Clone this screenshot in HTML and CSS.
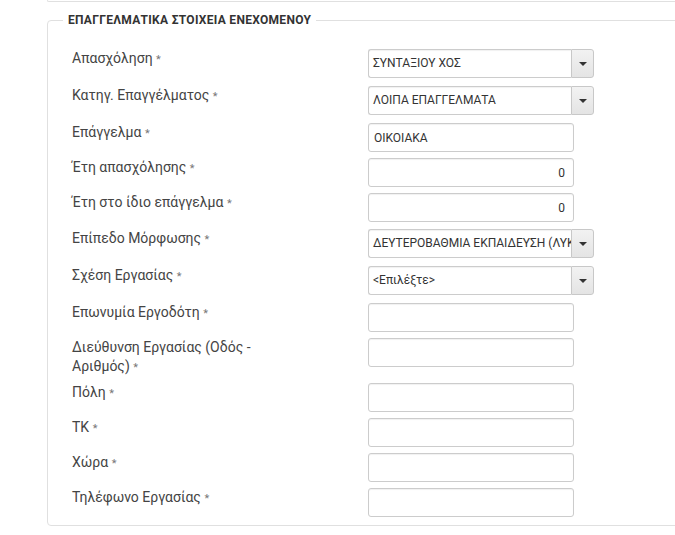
FILE: index.html
```html
<!DOCTYPE html>
<html lang="el">
<head>
  <meta charset="UTF-8" />
  <title>Επαγγελματικά στοιχεία</title>
  <link rel="stylesheet" href="styles.css">
</head>
<body>
  <div class="prev-panel"></div>

  <fieldset class="panel">
    <legend>ΕΠΑΓΓΕΛΜΑΤΙΚΑ ΣΤΟΙΧΕΙΑ ΕΝΕΧΟΜΕΝΟΥ</legend>

    <div class="row sel">
      <label class="lbl">Απασχόληση <span class="req">*</span></label>
      <div class="combo">
        <div class="combo-text">ΣΥΝΤΑΞΙΟΥ ΧΟΣ</div>
        <div class="combo-btn"><span class="caret"></span></div>
      </div>
    </div>

    <div class="row sel">
      <label class="lbl">Κατηγ. Επαγγέλματος <span class="req">*</span></label>
      <div class="combo">
        <div class="combo-text">ΛΟΙΠΑ ΕΠΑΓΓΕΛΜΑΤΑ</div>
        <div class="combo-btn"><span class="caret"></span></div>
      </div>
    </div>

    <div class="row">
      <label class="lbl">Επάγγελμα <span class="req">*</span></label>
      <input class="field" type="text" value="ΟΙΚΟΙΑΚΑ" />
    </div>

    <div class="row">
      <label class="lbl">Έτη απασχόλησης <span class="req">*</span></label>
      <input class="field num" type="text" value="0" />
    </div>

    <div class="row wide">
      <label class="lbl">Έτη στο ίδιο επάγγελμα <span class="req">*</span></label>
      <input class="field num" type="text" value="0" />
    </div>

    <div class="row sel">
      <label class="lbl">Επίπεδο Μόρφωσης <span class="req">*</span></label>
      <div class="combo">
        <div class="combo-text">ΔΕΥΤΕΡΟΒΑΘΜΙΑ ΕΚΠΑΙΔΕΥΣΗ (ΛΥΚΕΙΟ)</div>
        <div class="combo-btn"><span class="caret"></span></div>
      </div>
    </div>

    <div class="row sel">
      <label class="lbl">Σχέση Εργασίας <span class="req">*</span></label>
      <div class="combo">
        <div class="combo-text">&lt;Επιλέξτε&gt;</div>
        <div class="combo-btn"><span class="caret"></span></div>
      </div>
    </div>

    <div class="row">
      <label class="lbl">Επωνυμία Εργοδότη <span class="req">*</span></label>
      <input class="field" type="text" />
    </div>

    <div class="row">
      <label class="lbl">Διεύθυνση Εργασίας (Οδός - Αριθμός) <span class="req">*</span></label>
      <input class="field" type="text" />
    </div>

    <div class="row">
      <label class="lbl">Πόλη <span class="req">*</span></label>
      <input class="field" type="text" />
    </div>

    <div class="row">
      <label class="lbl">ΤΚ <span class="req">*</span></label>
      <input class="field" type="text" />
    </div>

    <div class="row">
      <label class="lbl">Χώρα <span class="req">*</span></label>
      <input class="field" type="text" />
    </div>

    <div class="row last">
      <label class="lbl">Τηλέφωνο Εργασίας <span class="req">*</span></label>
      <input class="field" type="text" />
    </div>
  </fieldset>
</body>
</html>
```

FILE: styles.css
```css
html, body {
  margin: 0;
  padding: 0;
  overflow: hidden;
  background: #fff;
}
body {
  padding-left: 47px;
  font-family: Roboto, 'Noto Sans', sans-serif;
  color: #444;
}
.prev-panel {
  height: 1px;
  margin-right: -20px;
  border-left: 1px solid #e0e0e0;
  border-bottom: 1px solid #e0e0e0;
  border-bottom-left-radius: 4px;
}
.panel {
  margin: 11px -20px 0 0;
  padding: 22px 0 8px 24px;
  border: 1px solid #e0e0e0;
  border-radius: 4px;
  min-width: 0;
}
.panel legend {
  margin-left: -9px;
  padding: 0 5px;
  font-size: 12px;
  line-height: 14px;
  font-weight: 700;
  letter-spacing: 0.3px;
  color: #333;
}
.row {
  display: flex;
  align-items: flex-start;
  margin-bottom: 6px;
}
.row.sel { margin-bottom: 8px; }
.row.wide { margin-bottom: 7px; }
.row.last { margin-bottom: 0; }
.lbl {
  width: 210px;
  margin-right: 86px;
  font-size: 14px;
  line-height: 19px;
  color: #444;
}
.req {
  font-size: 11px;
  color: #777;
}
.field {
  width: 206px;
  height: 29px;
  box-sizing: border-box;
  padding: 0 5px;
  font-family: Roboto, 'Noto Sans', sans-serif;
  font-size: 12px;
  color: #333;
  background: #fff;
  border: 1px solid #ccc;
  border-radius: 3px;
  box-shadow: inset 0 1px 1px rgba(0,0,0,0.06);
  outline: none;
}
.field.num {
  text-align: right;
  padding-right: 8px;
}
.combo {
  display: flex;
  width: 226px;
  height: 29px;
}
.combo-text {
  flex: 1 1 0;
  min-width: 0;
  box-sizing: border-box;
  padding: 0 4px;
  font-size: 12px;
  line-height: 27px;
  color: #333;
  white-space: nowrap;
  overflow: hidden;
  border: 1px solid #ccc;
  border-right: none;
  border-radius: 3px 0 0 3px;
  box-shadow: inset 0 1px 1px rgba(0,0,0,0.06);
}
.combo-btn {
  width: 23px;
  box-sizing: border-box;
  display: flex;
  align-items: center;
  justify-content: center;
  background: linear-gradient(#f2f2f2, #e4e4e4);
  border: 1px solid #c8c8c8;
  border-radius: 0 3px 3px 0;
}
.caret {
  width: 0;
  height: 0;
  border-left: 4px solid transparent;
  border-right: 4px solid transparent;
  border-top: 4px solid #333;
}
```
